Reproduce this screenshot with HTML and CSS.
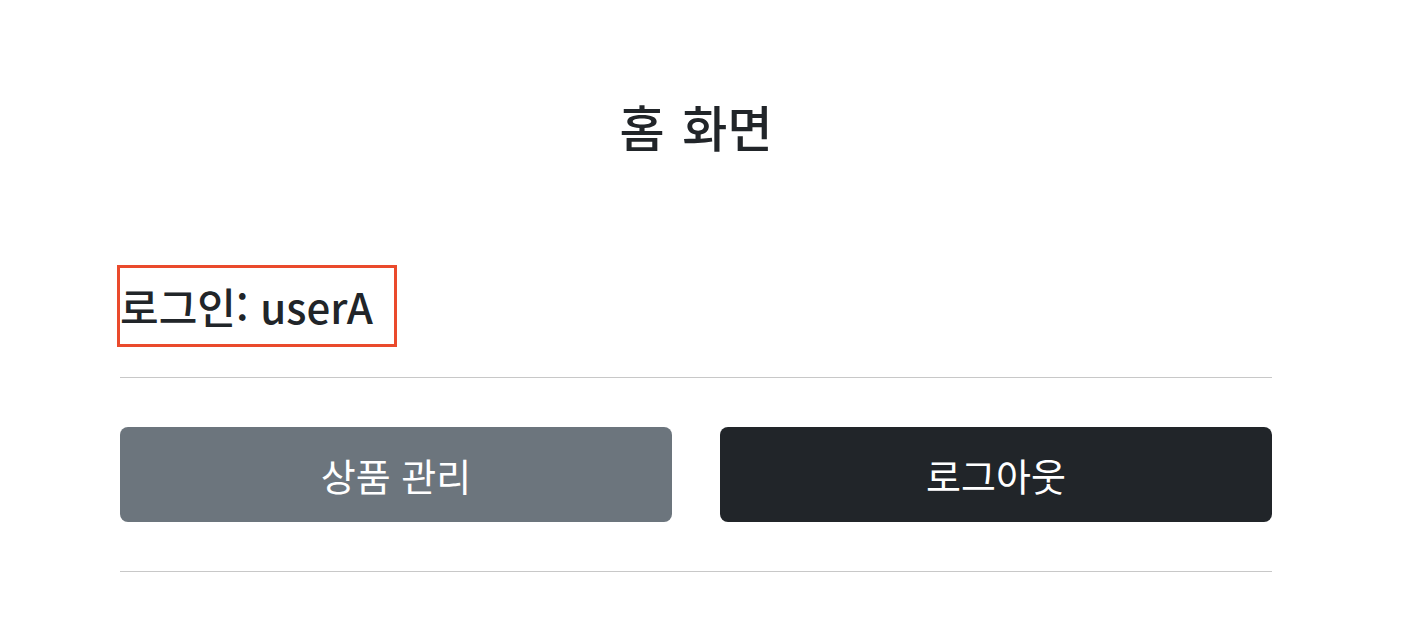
FILE: index.html
```html
<!DOCTYPE html>
<html lang="ko">
<head>
<meta charset="utf-8">
<title>홈 화면</title>
<link rel="stylesheet" href="styles.css">
</head>
<body>
<div class="container">
  <div class="header">
    <h2 class="title">홈 화면</h2>
  </div>
  <div class="login-row">
    <h4 class="login">로그인: userA</h4>
  </div>
  <hr class="rule">
  <div class="actions">
    <button class="btn btn-secondary" type="button">상품 관리</button>
    <button class="btn btn-dark" type="button">로그아웃</button>
  </div>
  <hr class="rule">
</div>
</body>
</html>
```
FILE: styles.css
```css
* { box-sizing: border-box; }
body {
  margin: 0;
  background: #fff;
  color: #212529;
  font-family: "Noto Sans CJK KR", "Noto Sans", sans-serif;
}
.container {
  width: 1152px;
  margin: 0 0 0 120px;
  padding-top: 97px;
}
.header {
  display: flex;
  justify-content: center;
}
.title {
  margin: 0;
  font-size: 49px;
  font-weight: 500;
  line-height: 1.2;
  word-spacing: 4px;
}
.login-row {
  display: flex;
  margin-top: 109px;
}
.login {
  margin: 0 0 0 -3px;
  border: 3px solid #ea4a2c;
  padding: 11px 21px 11px 0;
  font-size: 42px;
  font-weight: 500;
  line-height: 1.3;
}
.rule {
  margin: 30px 0 0;
  border: 0;
  border-top: 1px solid #c8c8c8;
}
.actions {
  display: flex;
  gap: 48px;
  margin-top: 49px;
}
.actions + .rule { margin-top: 49px; }
.btn {
  flex: 1;
  height: 95px;
  border: 0;
  border-radius: 8px;
  color: #fff;
  font-family: inherit;
  font-size: 38px;
  font-weight: 400;
}
.btn-secondary { background: #6c757d; }
.btn-dark { background: #212529; }
```
